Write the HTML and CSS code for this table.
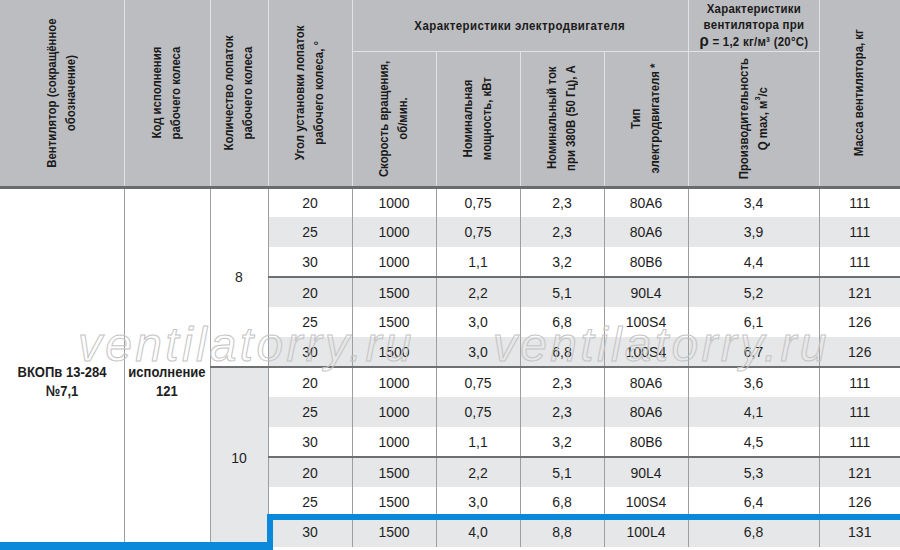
FILE: index.html
```html
<!DOCTYPE html>
<html lang="ru">
<head>
<meta charset="utf-8">
<link rel="stylesheet" href="styles.css">
</head>
<body>
<div class="wrap">
<table class="spec">
<colgroup>
<col class="w124"><col class="w86"><col class="w58"><col class="w84"><col class="w84"><col class="w84"><col class="w84"><col class="w84"><col class="w131"><col class="w81">
</colgroup>
<thead>
<tr class="r1">
<th rowspan="2" class="first"><div class="v">Вентилятор (сокращённое<br>обозначение)</div></th>
<th rowspan="2"><div class="v">Код исполнения<br>рабочего колеса</div></th>
<th rowspan="2"><div class="v">Количество лопаток<br>рабочего колеса</div></th>
<th rowspan="2"><div class="v">Угол установки лопаток<br>рабочего колеса, °</div></th>
<th colspan="4" class="grp"><span class="h">Характеристики электродвигателя</span></th>
<th class="grp fan"><span class="h">Характеристики<br>вентилятора при<br><span class="rho">ρ</span> = 1,2 кг/м³ (20°С)</span></th>
<th rowspan="2"><div class="v">Масса вентилятора, кг</div></th>
</tr>
<tr class="r2">
<th><div class="v">Скорость вращения,<br>об/мин.</div></th>
<th><div class="v">Номинальная<br>мощность, кВт</div></th>
<th><div class="v">Номинальный ток<br>при 380В (50 Гц), А</div></th>
<th><div class="v">Тип<br>электродвигателя *</div></th>
<th><div class="v">Производительность<br>Q max, м<sup>3</sup>/с</div></th>
</tr>
</thead>
<tbody>
<tr>
<td rowspan="12" class="name"><span class="nm">ВКОПв 13-284<br>№7,1</span></td>
<td rowspan="12" class="name"><span class="nm">исполнение<br>121</span></td>
<td rowspan="6">8</td>
<td>20</td><td>1000</td><td>0,75</td><td>2,3</td><td>80A6</td><td>3,4</td><td>111</td>
</tr>
<tr class="s"><td>25</td><td>1000</td><td>0,75</td><td>2,3</td><td>80A6</td><td>3,9</td><td>111</td></tr>
<tr><td>30</td><td>1000</td><td>1,1</td><td>3,2</td><td>80B6</td><td>4,4</td><td>111</td></tr>
<tr class="s gs"><td>20</td><td>1500</td><td>2,2</td><td>5,1</td><td>90L4</td><td>5,2</td><td>121</td></tr>
<tr><td>25</td><td>1500</td><td>3,0</td><td>6,8</td><td>100S4</td><td>6,1</td><td>126</td></tr>
<tr class="s"><td>30</td><td>1500</td><td>3,0</td><td>6,8</td><td>100S4</td><td>6,7</td><td>126</td></tr>
<tr class="gs">
<td rowspan="6" class="shade">10</td>
<td>20</td><td>1000</td><td>0,75</td><td>2,3</td><td>80A6</td><td>3,6</td><td>111</td>
</tr>
<tr class="s"><td>25</td><td>1000</td><td>0,75</td><td>2,3</td><td>80A6</td><td>4,1</td><td>111</td></tr>
<tr><td>30</td><td>1000</td><td>1,1</td><td>3,2</td><td>80B6</td><td>4,5</td><td>111</td></tr>
<tr class="s gs"><td>20</td><td>1500</td><td>2,2</td><td>5,1</td><td>90L4</td><td>5,3</td><td>121</td></tr>
<tr><td>25</td><td>1500</td><td>3,0</td><td>6,8</td><td>100S4</td><td>6,4</td><td>126</td></tr>
<tr class="s"><td>30</td><td>1500</td><td>4,0</td><td>8,8</td><td>100L4</td><td>6,8</td><td>131</td></tr>
</tbody>
</table>
<div class="wm wm1">ventilatorry.ru</div>
<div class="wm wm2">ventilatorry.ru</div>
<div class="hl"></div>
<div class="hl2"></div>
</div>
</body>
</html>
```
FILE: styles.css
```css
html, body {
  margin: 0;
  padding: 0;
  background: #fff;
}
.wrap {
  position: relative;
  width: 900px;
  height: 550px;
  overflow: hidden;
}
.spec {
  border-collapse: collapse;
  table-layout: fixed;
  width: 900px;
  font-family: "Liberation Sans", Arial, sans-serif;
  color: #1e1e1e;
}
.w124 { width: 124px; }
.w86 { width: 86px; }
.w58 { width: 58px; }
.w84 { width: 84px; }
.w131 { width: 131px; }
.w81 { width: 81px; }

.spec th {
  background: #bcbdc0;
  border: 1px solid #e2e2e2;
  border-top: 0;
  padding: 0;
  font-family: "Liberation Sans", Arial, sans-serif;
  font-weight: bold;
  font-size: 12.5px;
  line-height: 19px;
  text-align: center;
  vertical-align: middle;
  color: #1a1a1a;
}
.spec th.first { border-left: 0; }
.spec th:last-child { border-right: 0; }
.spec tr.r1 { height: 51px; }
.spec tr.r2 { height: 136px; }
.spec th[rowspan], .spec tr.r2 th {
  border-bottom: 3px solid #6a6b6d;
}
.spec th.grp {
  font-size: 13px;
  letter-spacing: 0.5px;
}
.spec th.fan {
  line-height: 16px;
  letter-spacing: 0.3px;
}
.h {
  display: inline-block;
  white-space: nowrap;
  margin: 0 -14px;
  transform: scaleX(0.88);
}
.rho {
  font-size: 17px;
}
.spec sup {
  font-size: 8px;
  line-height: 0;
  vertical-align: 5px;
}
.v {
  display: inline-block;
  writing-mode: vertical-rl;
  transform: rotate(180deg) scaleY(0.91);
  text-align: center;
  vertical-align: middle;
  white-space: nowrap;
}

.spec tbody tr { height: 30px; }
.spec td {
  padding: 0;
  text-align: center;
  vertical-align: middle;
  font-size: 14px;
  border-left: 1px solid #9e9e9e;
  border-right: 1px solid #9e9e9e;
  background: #fff;
}
.spec td:first-child { border-left: 0; }
.spec tr td:last-child { border-right: 0; }
.spec tr.s td { background: #e6e7e8; }
.spec td.shade { background: #e6e7e8; }
.spec tr.gs td { border-top: 2px solid #6e6f71; }
.spec td.name {
  background: #fff;
  font-weight: bold;
  font-size: 15.5px;
  line-height: 19px;
  padding-top: 26px;
}
.nm {
  display: inline-block;
  white-space: nowrap;
  margin: 0 -8px;
  transform: scaleX(0.84);
}

.wm {
  position: absolute;
  top: 321px;
  font-family: "Liberation Sans", Arial, sans-serif;
  font-style: italic;
  font-size: 48px;
  line-height: 48px;
  letter-spacing: 3.3px;
  color: transparent;
  -webkit-text-stroke: 1px #c4c4c4;
  white-space: nowrap;
  pointer-events: none;
}
.wm1 { left: 78px; }
.wm2 { left: 493px; }

.hl {
  position: absolute;
  left: 267px;
  top: 514px;
  right: 0;
  height: 60px;
  border-top: 6px solid #0a89da;
  border-left: 6px solid #0a89da;
}
.hl2 {
  position: absolute;
  left: 0;
  top: 542px;
  width: 273px;
  height: 8px;
  background: #0a89da;
}
```
